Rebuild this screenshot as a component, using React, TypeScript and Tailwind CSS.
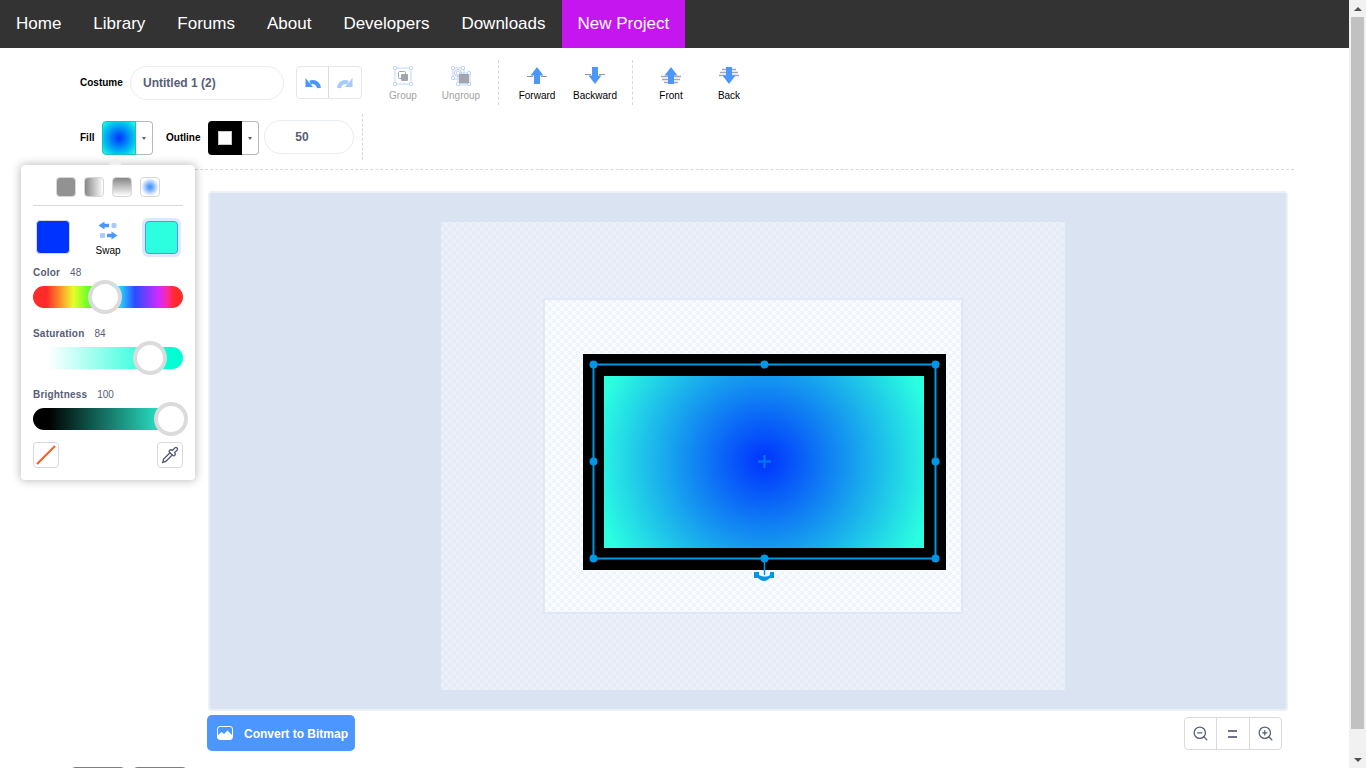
import { Pipette, ZoomIn, ZoomOut } from 'lucide-react';

const navItems = ['Home', 'Library', 'Forums', 'About', 'Developers', 'Downloads'];

function Arrow({ dir, lines }: { dir: 'up' | 'down'; lines: 'one' | 'two' }) {
  const arrow = dir === 'up' ? 'M10 1 L16.5 9.5 H13 V18 H7 V9.5 H3.5 Z' : 'M10 18 L16.5 9.5 H13 V1 H7 V9.5 H3.5 Z';
  return (
    <svg width="20" height="20" viewBox="0 0 20 20">
      {lines === 'one' ? (
        <path d={dir === 'up' ? 'M0 10.5H6M14 10.5H20' : 'M0 8.5H6M14 8.5H20'} stroke="#8f94a6" strokeWidth="1.2" />
      ) : dir === 'up' ? (
        <path d="M0 10.5H7M13 10.5H20M1 13.5H7M13 13.5H19M3 16.5H7M13 16.5H17" stroke="#a3a7b5" strokeWidth="1.6" />
      ) : (
        <path d="M3 3.5H7M13 3.5H17M1 6.5H7M13 6.5H19M0 9.5H7M13 9.5H20" stroke="#a3a7b5" strokeWidth="1.6" />
      )}
      <path d={arrow} fill="#4c97ff" />
    </svg>
  );
}

function GroupIcon() {
  return (
    <svg width="20" height="20" viewBox="0 0 20 20">
      <rect x="2" y="2" width="16" height="16" fill="none" stroke="#bcd6ff" strokeWidth="1" />
      {[[0, 0], [16, 0], [0, 16], [16, 16]].map(([x, y]) => (
        <rect key={`${x}-${y}`} x={x + 0.5} y={y + 0.5} width="3" height="3" rx="1" fill="#fff" stroke="#a9cbff" />
      ))}
      <rect x="5.5" y="5.5" width="7" height="7" rx="1" fill="#fff" stroke="#a2a5ad" />
      <rect x="8" y="8" width="7" height="7" rx="1" fill="#a2a5ad" />
    </svg>
  );
}

function UngroupIcon() {
  return (
    <svg width="20" height="20" viewBox="0 0 20 20">
      <rect x="2" y="2" width="11" height="11" fill="none" stroke="#bcd6ff" />
      <rect x="7" y="7" width="12" height="12" fill="none" stroke="#bcd6ff" />
      {[[0, 0], [10, 0], [0, 10], [5, 5], [16, 5], [5, 16], [16, 16]].map(([x, y]) => (
        <rect key={`${x}-${y}`} x={x + 0.5} y={y + 0.5} width="3" height="3" rx="1" fill="#fff" stroke="#a9cbff" />
      ))}
      <circle cx="7" cy="7" r="3.5" fill="none" stroke="#c4c6cc" />
      <rect x="8" y="8" width="10" height="9.5" rx="1" fill="#a2a5ad" />
    </svg>
  );
}

function ToolButton({ label, muted, children }: { label: string; muted?: boolean; children: React.ReactNode }) {
  return (
    <div className="flex h-[45px] w-[58px] flex-col items-center">
      <div className="flex h-[26px] items-end justify-center">{children}</div>
      <span className={`mt-[4px] text-[10px] leading-[12px] ${muted ? 'text-[#a3a3a3]' : 'text-black'}`}>{label}</span>
    </div>
  );
}

function UndoIcon({ flip }: { flip?: boolean }) {
  return (
    <svg width="16" height="12" viewBox="0 0 16 12" className={flip ? '-scale-x-100 opacity-50' : ''}>
      <path d="M14 11 C13.5 6.5 9.5 4 5 5.5" fill="none" stroke="#4c97ff" strokeWidth="4" />
      <path d="M0.5 1 V10 H8 Z" fill="#4c97ff" />
    </svg>
  );
}

function Slider({ label, value, gap, track, thumb, className }: { label: string; value: number; gap: string; track: string; thumb: string; className: string }) {
  return (
    <div className={className}>
      <div className="flex h-[12px] items-center text-[10px] leading-[12px] text-[#575e75]">
        <span className="font-bold tracking-[0.2px]">{label}</span>
        <span className={gap}>{value}</span>
      </div>
      <div className={`relative mt-[7px] h-[22px] rounded-full ${track}`}>
        <div className={`absolute top-[-6px] h-[34px] w-[34px] rounded-full border-[4px] border-[#d9d9d9]/95 bg-white ${thumb}`} />
      </div>
    </div>
  );
}

function ColorPopover() {
  return (
    <div className="absolute left-[21px] top-[165px] z-10 h-[315px] w-[174px] rounded-[4px] bg-white px-[12px] shadow-[0_0_8px_1px_rgba(0,0,0,0.25)]">
      <div className="absolute left-[87px] top-[-7px] h-0 w-0 border-x-[7px] border-b-[7px] border-x-transparent border-b-[#efefef]" />
      <div className="flex h-[41px] items-end justify-center gap-[8px] border-b border-[#d9d9d9] pb-[8px]">
        <div className="h-[20px] w-[20px] rounded-[4px] border border-[#d6d6d6] bg-[#929292]" />
        <div className="h-[20px] w-[20px] rounded-[4px] border border-[#d6d6d6] bg-gradient-to-r from-[#888] to-white" />
        <div className="h-[20px] w-[20px] rounded-[4px] border border-[#d6d6d6] bg-gradient-to-b from-[#888] to-white" />
        <div className="h-[20px] w-[20px] rounded-[4px] border border-[#d6d6d6] bg-[radial-gradient(circle,#4c97ff_10%,#ffffff_70%)]" />
      </div>
      <div className="mt-[11px] flex h-[40px] items-center justify-between">
        <div className="ml-[3px] h-[34px] w-[34px] rounded-[4px] border border-[#d9d9d9] bg-[#0033ff]" />
        <div className="ml-[4px] mt-[4px] flex flex-col items-center self-start">
          <svg width="20" height="20" viewBox="0 0 20 20">
            <path d="M6.5 0.5 L0.5 4.5 L6.5 8.5 V6.2 H11 V2.8 H6.5 Z" fill="#4c97ff" />
            <rect x="13.5" y="2" width="5" height="5" rx="1" fill="#a9cbff" />
            <rect x="2" y="12" width="5" height="5" rx="1" fill="#a9cbff" />
            <path d="M13.5 10.5 L19.5 14.5 L13.5 18.5 V16.2 H9 V12.8 H13.5 Z" fill="#4c97ff" />
          </svg>
          <span className="mt-[4px] text-[10px] leading-[11px] text-black">Swap</span>
        </div>
        <div className="mr-[2px] rounded-[6px] bg-[#dbe9ff] p-[3px]">
          <div className="h-[33px] w-[33px] rounded-[4px] border border-[#4c97ff] bg-[#2bffe0]" />
        </div>
      </div>
      <Slider
        label="Color"
        value={48}
        gap="ml-[10px]"
        track="bg-[linear-gradient(to_right,#ff2a2a_9%,#ffa72a_20%,#e4ff2a_27%,#2aff2a_42%,#2ad4ff_58%,#2a4cff_68%,#d42aff_84%,#ff2a9a_90%,#ff2a2a_94%)]"
        thumb="left-[55px]"
        className="mt-[10px]"
      />
      <Slider
        label="Saturation"
        value={84}
        gap="ml-[10px]"
        track="bg-[linear-gradient(to_right,#ffffff_10%,#00ffd5_90%)]"
        thumb="left-[100px]"
        className="mt-[20px]"
      />
      <Slider
        label="Brightness"
        value={100}
        gap="ml-[10px]"
        track="bg-[linear-gradient(to_right,#000000_10%,#2bf0d2_90%)]"
        thumb="left-[121px]"
        className="mt-[20px]"
      />
      <div className="mt-[12px] flex justify-between">
        <div className="flex h-[26px] w-[26px] items-center justify-center rounded-[4px] border border-[#d9d9d9]">
          <svg width="20" height="20" viewBox="0 0 20 20">
            <path d="M1 19 L19 1" stroke="#ff5a1f" strokeWidth="2" />
          </svg>
        </div>
        <div className="flex h-[26px] w-[26px] items-center justify-center rounded-[4px] border border-[#d9d9d9]">
          <Pipette size={18} color="#575e75" strokeWidth={1.8} />
        </div>
      </div>
    </div>
  );
}

function Stage() {
  const handles = [
    [385.5, 173.5], [556.5, 173.5], [727.5, 173.5],
    [385.5, 270.5], [727.5, 270.5],
    [385.5, 367.5], [556.5, 367.5], [727.5, 367.5],
  ];
  return (
    <svg width="1076" height="516" viewBox="2 2 1076 516" className="block">
      <defs>
        <pattern id="outerTile" width="8" height="8" patternUnits="userSpaceOnUse">
          <rect width="8" height="8" fill="#ebf0f9" />
          <rect width="4" height="4" fill="#e4ebf6" />
          <rect x="4" y="4" width="4" height="4" fill="#e4ebf6" />
        </pattern>
        <pattern id="innerTile" width="8" height="8" patternUnits="userSpaceOnUse">
          <rect width="8" height="8" fill="#fbfcfe" />
          <rect width="4" height="4" fill="#f0f4fb" />
          <rect x="4" y="4" width="4" height="4" fill="#f0f4fb" />
        </pattern>
        <radialGradient id="fillGrad" gradientUnits="userSpaceOnUse" cx="556" cy="270" r="172">
          <stop offset="0" stopColor="#0033ff" />
          <stop offset="1" stopColor="#2bffe0" />
        </radialGradient>
      </defs>
      <rect x="233" y="31" width="624" height="468" fill="url(#outerTile)" />
      <rect x="336" y="108" width="418" height="314" fill="url(#innerTile)" stroke="#dbe5f5" strokeWidth="1.5" />
      <rect x="375" y="163" width="363" height="216" fill="#000" />
      <rect x="396" y="185" width="320" height="172" fill="url(#fillGrad)" />
      <rect x="385.5" y="173.5" width="342" height="194" fill="none" stroke="#0096e6" strokeWidth="2" />
      {handles.map(([x, y]) => (
        <circle key={`${x}-${y}`} cx={x} cy={y} r="4" fill="#0096e6" />
      ))}
      <path d="M556.5 367 V384" stroke="#0096e6" strokeWidth="1.5" />
      <path d="M546 381 H551 V384 C553 386 560 386 562 384 V381 H566 V387 H562 C558 391 554 391 550 387 H546 Z" fill="#0096e6" />
      <path d="M556.5 265 V276 M551 270.5 H562" stroke="#0096e6" strokeWidth="2.5" strokeLinecap="round" opacity="0.65" />
    </svg>
  );
}

export default function App() {
  return (
    <div className="flex h-screen overflow-hidden bg-white font-['Liberation_Sans',Arial,sans-serif]">
      <div className="relative w-[1349px] shrink-0">
        {/* NAV */}
        <nav className="flex h-[48px] bg-[#333333] text-[17px] text-white">
          {navItems.map((item) => (
            <a key={item} className="flex items-center px-[16px]">{item}</a>
          ))}
          <a className="flex items-center bg-[#c516f0] px-[16px]">New Project</a>
        </nav>

        {/* TOOLBAR */}
        <div className="ml-[60px] w-[1234px] border-b border-dashed border-[#d9d9d9] pb-[9px] pl-[20px]">
          <div className="flex h-[66px] items-start pt-[12px]">
            <span className="mt-[6px] h-[34px] w-[50px] text-[10px] font-bold leading-[34px] text-black">Costume</span>
            <div className="mt-[6px] flex h-[34px] w-[154px] items-center rounded-full border border-[#e8edf1] pl-[12px] text-[12px] font-bold text-[#575e75]">Untitled 1 (2)</div>
            <div className="ml-[12px] mt-[6px] flex h-[33px] w-[66px] rounded-[4px] border border-[#e3e6ea]">
              <div className="flex w-[32px] items-center justify-center border-r border-[#d9d9d9]"><UndoIcon /></div>
              <div className="flex flex-1 items-center justify-center"><UndoIcon flip /></div>
            </div>
            <div className="ml-[12px] flex">
              <ToolButton label="Group" muted><GroupIcon /></ToolButton>
              <ToolButton label="Ungroup" muted><UngroupIcon /></ToolButton>
            </div>
            <div className="ml-[8px] h-[45px] border-l border-dashed border-[#d9d9d9]" />
            <div className="ml-[9px] flex">
              <ToolButton label="Forward"><Arrow dir="up" lines="one" /></ToolButton>
              <ToolButton label="Backward"><Arrow dir="down" lines="one" /></ToolButton>
            </div>
            <div className="ml-[8px] h-[45px] border-l border-dashed border-[#d9d9d9]" />
            <div className="ml-[9px] flex">
              <ToolButton label="Front"><Arrow dir="up" lines="two" /></ToolButton>
              <ToolButton label="Back"><Arrow dir="down" lines="two" /></ToolButton>
            </div>
          </div>
          <div className="flex h-[46px] items-start">
            <span className="mt-[7px] h-[34px] w-[22px] text-[10px] font-bold leading-[34px] text-black">Fill</span>
            <div className="mt-[7px] flex h-[34px] w-[51px]">
              <div className="w-[34px] rounded-l-[4px] border border-[#19c4b0] bg-[radial-gradient(circle,#0033ff_0%,#00c8f0_70%,#2bffe0_100%)]" />
              <div className="flex flex-1 items-center justify-center rounded-r-[4px] border border-l-0 border-[#b9b9b9]">
                <div className="h-0 w-0 border-x-[2.5px] border-t-[3px] border-x-transparent border-t-[#575e75]" />
              </div>
            </div>
            <span className="ml-[13px] mt-[7px] h-[34px] w-[42px] text-[10px] font-bold leading-[34px] text-black">Outline</span>
            <div className="mt-[7px] flex h-[34px] w-[51px]">
              <div className="flex w-[34px] items-center justify-center rounded-l-[4px] bg-black">
                <div className="h-[14px] w-[14px] border border-[#c8c8c8] bg-white" />
              </div>
              <div className="flex flex-1 items-center justify-center rounded-r-[4px] border border-l-0 border-[#b9b9b9]">
                <div className="h-0 w-0 border-x-[2.5px] border-t-[3px] border-x-transparent border-t-[#575e75]" />
              </div>
            </div>
            <div className="ml-[5px] mt-[6px] flex h-[34px] w-[90px] items-center justify-center rounded-full border border-[#e8edf1] pr-[14px] text-[12px] font-bold text-[#575e75]">50</div>
            <div className="ml-[8px] h-[46px] border-l border-dashed border-[#d9d9d9]" />
          </div>
        </div>

        {/* CANVAS */}
        <div className="ml-[208px] mt-[21px] w-[1080px] rounded-[4px] border-2 border-[#ecf0f4] bg-[#d9e3f2]">
          <Stage />
        </div>

        {/* BOTTOM CONTROLS */}
        <div className="ml-[207px] mt-[4px] flex w-[1075px] items-start justify-between">
          <button className="flex h-[36px] w-[148px] items-center rounded-[5px] bg-[#4c97ff] pl-[10px] text-[12px] font-bold text-white">
            <svg width="16" height="14" viewBox="0 0 16 14" className="mr-[11px]">
              <rect x="0.5" y="0.5" width="15" height="13" rx="2.5" fill="none" stroke="#fff" />
              <path d="M1 13 V9 L4.5 6 L7 8 L10.5 4.5 L15 9 V13 Z" fill="#fff" />
            </svg>
            <span className="mt-[2px]">Convert to Bitmap</span>
          </button>
          <div className="mt-[2px] flex h-[33px] w-[98px] rounded-[4px] border border-[#d9d9d9] text-[#575e75]">
            <div className="flex flex-1 items-center justify-center border-r border-[#d9d9d9]"><ZoomOut size={17} strokeWidth={1.8} /></div>
            <div className="flex flex-1 flex-col items-center justify-center gap-[4px] border-r border-[#d9d9d9]">
              <div className="h-[2px] w-[9px] bg-[#6d7389]" />
              <div className="h-[2px] w-[9px] bg-[#6d7389]" />
            </div>
            <div className="flex flex-1 items-center justify-center"><ZoomIn size={17} strokeWidth={1.8} /></div>
          </div>
        </div>
        <div className="ml-[71px] mt-[16px] flex gap-[8px]">
          <div className="h-[30px] w-[54px] rounded-[4px] border border-[#7d7d7d]" />
          <div className="h-[30px] w-[54px] rounded-[4px] border border-[#7d7d7d]" />
        </div>

        <ColorPopover />
      </div>

      {/* SCROLLBAR */}
      <div className="flex w-[17px] flex-col items-center bg-[#f1f1f1]">
        <div className="flex h-[17px] items-center justify-center">
          <div className="h-0 w-0 border-x-[4px] border-b-[4px] border-x-transparent border-b-[#505050]" />
        </div>
        <div className="h-[712px] w-[13px] bg-[#c1c1c1]" />
        <div className="mt-auto flex h-[17px] items-center justify-center">
          <div className="h-0 w-0 border-x-[4px] border-t-[4px] border-x-transparent border-t-[#505050]" />
        </div>
      </div>
    </div>
  );
}
